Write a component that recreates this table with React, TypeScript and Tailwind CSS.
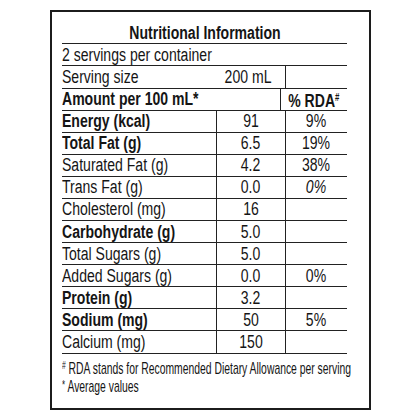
import React from "react";

type Row = {
  label: string;
  value: string;
  rda?: string;
  bold?: boolean;
  italicRda?: boolean;
};

const rows: Row[] = [
  { label: "Energy (kcal)", value: "91", rda: "9%", bold: true },
  { label: "Total Fat (g)", value: "6.5", rda: "19%", bold: true },
  { label: "Saturated Fat (g)", value: "4.2", rda: "38%" },
  { label: "Trans Fat (g)", value: "0.0", rda: "0%", italicRda: true },
  { label: "Cholesterol (mg)", value: "16" },
  { label: "Carbohydrate (g)", value: "5.0", bold: true },
  { label: "Total Sugars (g)", value: "5.0" },
  { label: "Added Sugars (g)", value: "0.0", rda: "0%" },
  { label: "Protein (g)", value: "3.2", bold: true },
  { label: "Sodium (mg)", value: "50", rda: "5%", bold: true },
  { label: "Calcium (mg)", value: "150" },
];

// narrow type: Arial-width font squeezed to a condensed look
const NarrowL = ({ children }: { children: React.ReactNode }) => (
  <span className="inline-block whitespace-nowrap origin-left scale-x-[0.78]">{children}</span>
);
const NarrowC = ({ children }: { children: React.ReactNode }) => (
  <span className="inline-block whitespace-nowrap origin-center scale-x-[0.78]">{children}</span>
);

const line = "border-[#222]";

export default function App() {
  return (
    <div className="w-[420px] h-[420px] bg-white pt-[10px] pl-[50px] text-[#151515] font-['Liberation_Sans',Arial,sans-serif]">
      <div className="w-[321px] h-[400px] border-2 border-[#1c1c1c] pl-[10px] pr-[22px]">
        <div className={`h-[32px] border-b-[1.5px] ${line} flex items-end justify-center pb-[1px] text-[18px] font-bold leading-none`}>
          <NarrowC>Nutritional Information</NarrowC>
        </div>
        <div className={`h-[22px] border-b-[1.5px] ${line} flex items-center text-[18px] leading-none`}>
          <NarrowL>2 servings per container</NarrowL>
        </div>
        <div className={`h-[22.5px] border-b-[1.5px] ${line} flex text-[18px] leading-none`}>
          <div className="w-[154px] flex items-center">
            <NarrowL>Serving size</NarrowL>
          </div>
          <div className="w-[69px] flex items-center justify-center pr-[4px]">
            <NarrowC>200 mL</NarrowC>
          </div>
          <div className={`flex-1 border-l-[1.5px] ${line}`} />
        </div>
        <div className={`h-[22px] border-b-[1.5px] ${line} flex text-[18px] leading-none font-bold`}>
          <div className="w-[223px] flex items-center">
            <NarrowL>Amount per 100 mL*</NarrowL>
          </div>
          <div className={`flex-1 border-l-[1.5px] ${line} flex items-center justify-center pt-[3px]`}>
            <NarrowC>
              % RDA<sup className="text-[10px] -top-[6px]">#</sup>
            </NarrowC>
          </div>
        </div>
        {rows.map((r) => (
          <div
            key={r.label}
            className={`h-[22.1px] border-b-[1.5px] ${line} flex text-[18px] leading-none`}
          >
            <div className={`w-[154px] flex items-center ${r.bold ? "font-bold" : ""}`}>
              <NarrowL>{r.label}</NarrowL>
            </div>
            <div className={`w-[69px] border-l-[1.5px] ${line} flex items-center justify-center`}>
              <NarrowC>{r.value}</NarrowC>
            </div>
            <div
              className={`flex-1 border-l-[1.5px] ${line} flex items-center justify-center ${r.italicRda ? "italic" : ""}`}
            >
              <NarrowC>{r.rda ?? ""}</NarrowC>
            </div>
          </div>
        ))}
        <div className="pt-[6px] text-[17px] leading-[18px] whitespace-nowrap">
          <div className="origin-left scale-x-[0.61] w-[500px]">
            <sup className="text-[11px] -top-[5px]">#</sup> RDA stands for Recommended Dietary Allowance per serving
          </div>
          <div className="origin-left scale-x-[0.61] w-[500px]">
            <sup className="text-[13px] -top-[3px]">*</sup> Average values
          </div>
        </div>
      </div>
    </div>
  );
}
